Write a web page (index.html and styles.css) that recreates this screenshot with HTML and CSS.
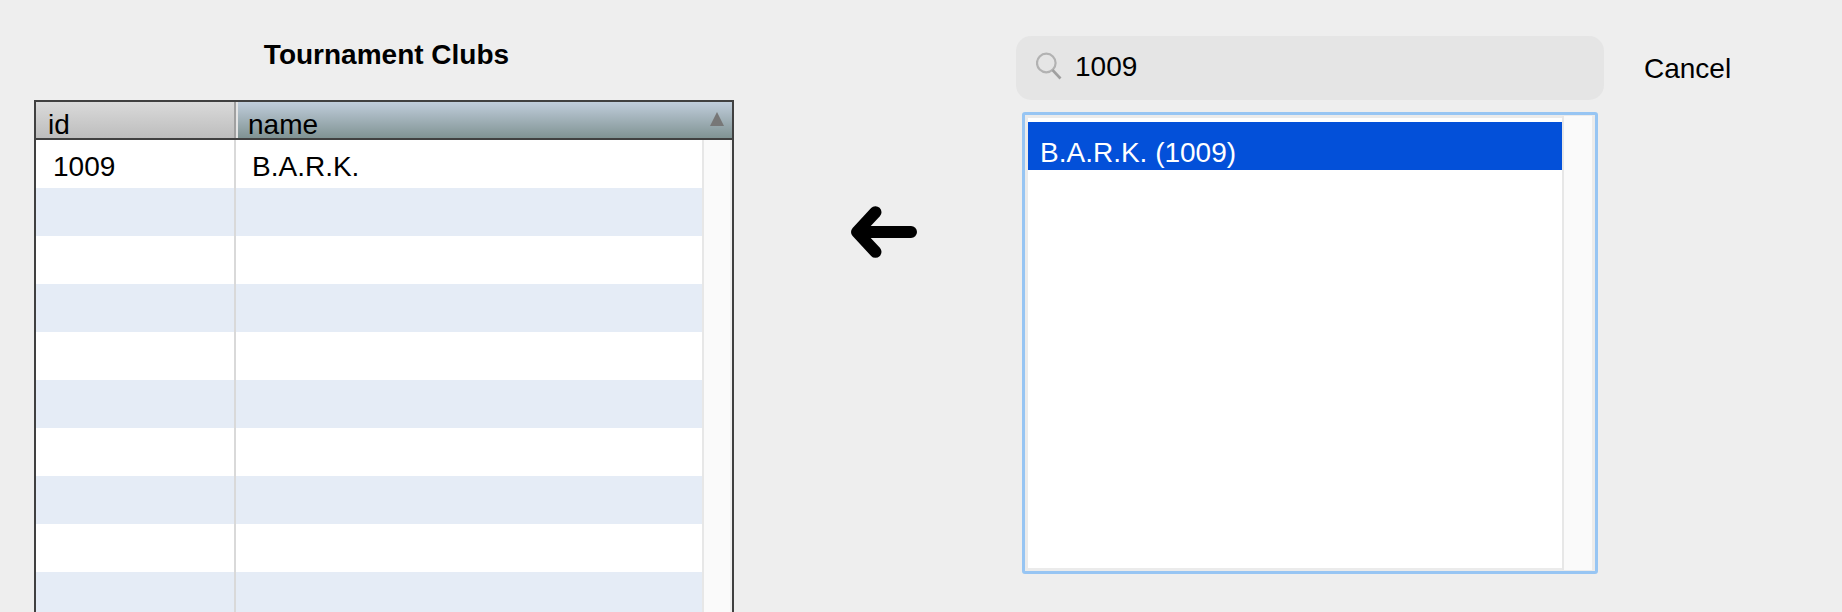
FILE: index.html
```html
<!DOCTYPE html>
<html lang="en">
<head>
<meta charset="utf-8">
<title>Tournament Clubs</title>
<link rel="stylesheet" href="styles.css">
</head>
<body>
<main class="picker">
  <section class="clubs">
    <h1 class="clubs-title">Tournament Clubs</h1>
    <div class="table">
      <div class="table-head">
        <div class="head-id">id</div>
        <div class="head-name"><span>name</span>
          <svg class="sort" width="14" height="14" viewBox="0 0 14 14"><path d="M7 0 14 14H0z" fill="#777"/></svg>
        </div>
      </div>
      <div class="table-body">
        <div class="rows">
          <div class="row"><div class="cell-id">1009</div><div class="cell-name">B.A.R.K.</div></div>
          <div class="row"><div class="cell-id"></div><div class="cell-name"></div></div>
          <div class="row"><div class="cell-id"></div><div class="cell-name"></div></div>
          <div class="row"><div class="cell-id"></div><div class="cell-name"></div></div>
          <div class="row"><div class="cell-id"></div><div class="cell-name"></div></div>
          <div class="row"><div class="cell-id"></div><div class="cell-name"></div></div>
          <div class="row"><div class="cell-id"></div><div class="cell-name"></div></div>
          <div class="row"><div class="cell-id"></div><div class="cell-name"></div></div>
          <div class="row"><div class="cell-id"></div><div class="cell-name"></div></div>
          <div class="row"><div class="cell-id"></div><div class="cell-name"></div></div>
        </div>
        <div class="scroll-track"></div>
      </div>
    </div>
  </section>
  <div class="transfer">
    <svg width="66" height="52" viewBox="0 0 66 52" fill="none" stroke="#000" stroke-width="12" stroke-linecap="round" stroke-linejoin="round"><path d="M60 26H8M24.500 6.200 6 26 24.500 45.800"/></svg>
  </div>
  <section class="search">
    <div class="search-bar">
      <div class="search-field">
        <svg class="lens" width="27" height="29" viewBox="0 0 27 29" fill="none"><circle cx="10.300" cy="11" r="9.300" stroke="#b2b2b2" stroke-width="2.200"/><path d="m16.500 18 8 8.500" stroke="#a0a0a0" stroke-width="2.600"/></svg>
        <span>1009</span>
      </div>
      <div class="cancel">Cancel</div>
    </div>
    <div class="list">
      <div class="list-items"><div class="list-item">B.A.R.K. (1009)</div></div>
      <div class="list-track"></div>
    </div>
  </section>
</main>
</body>
</html>
```
FILE: styles.css
```css
* { box-sizing: border-box; }
body {
  margin: 0;
  height: 612px;
  overflow: hidden;
  background: #eee;
  color: #000;
  font: 28px/32px "Liberation Sans", Arial, sans-serif;
}
.picker { display: flex; height: 612px; padding-left: 34px; }
.clubs { width: 700px; display: flex; flex-direction: column; }
.clubs-title {
  margin: 0;
  height: 100px;
  padding: 39px 0 0 5px;
  font-size: 28px;
  line-height: 32px;
  text-align: center;
}
.table {
  flex: 1;
  min-height: 0;
  overflow: hidden;
  border: 2px solid #404040;
  border-bottom: 0;
}
.table-head { display: flex; height: 38px; border-bottom: 2px solid #404040; }
.head-id {
  width: 200px;
  height: 36px;
  padding: 7px 0 0 12px;
  border-right: 2px solid #a0a0a0;
  background: linear-gradient(#dadada, #bdbdbd);
}
.head-name {
  flex: 1;
  display: flex;
  height: 36px;
  justify-content: space-between;
  padding: 7px 8px 0 10px;
  border-left: 2px solid #e4e4e4;
  background: linear-gradient(#c0cddb, #809393);
}
.sort { margin-top: 3px; }
.table-body { display: flex; }
.rows { flex: 1; }
.row { display: flex; height: 48px; background: #fff; }
.row:nth-child(even) { background: #e5ecf6; }
.cell-id { width: 200px; padding: 11px 0 0 17px; border-right: 2px solid #d9d9d9; }
.cell-name { padding: 11px 0 0 16px; }
.scroll-track {
  width: 30px;
  border-left: 2px solid #e7e7e7;
  border-right: 2px solid #f0f0f0;
  background: #fafafa;
}
.transfer { width: 282px; padding: 206px 0 0 117px; line-height: 0; }
.search { flex: 1; padding-top: 36px; }
.search-bar { display: flex; height: 64px; }
.search-field {
  display: flex;
  width: 588px;
  padding: 15px 0 0 20px;
  border-radius: 15px;
  background: #e5e5e5;
}
.lens { margin: 1px 12px 0 0; }
.cancel { padding: 17px 0 0 40px; }
.list {
  display: flex;
  width: 576px;
  height: 462px;
  margin: 12px 0 0 6px;
  padding: 1px 3px;
  border: 3px solid #97c5f3;
  border-radius: 3px;
  background: #ebebeb;
}
.list-items { flex: 1; margin: 2px 0; padding-top: 4px; background: #fff; }
.list-item { height: 48px; padding: 15px 0 0 12px; background: #0350d9; color: #fff; }
.list-track { width: 30px; border-left: 2px solid #e7e7e7; background: #fafafa; }
```
